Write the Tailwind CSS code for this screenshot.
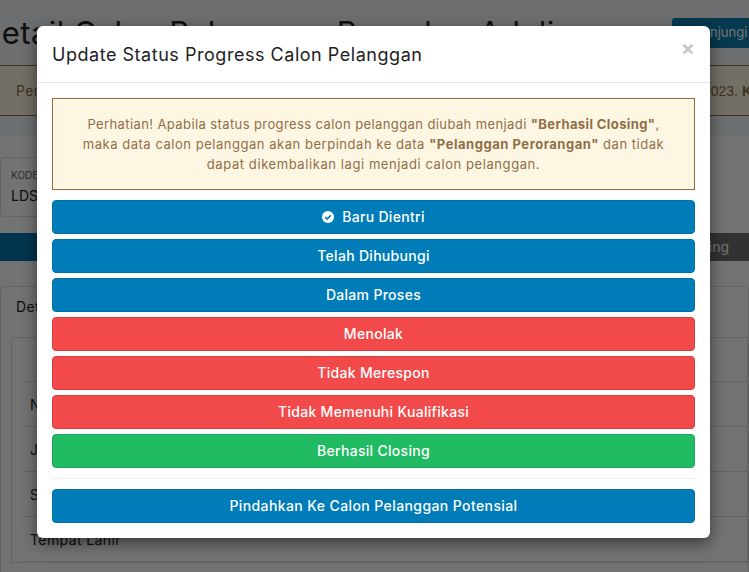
<!DOCTYPE html>
<html lang="en">
<head>
    <meta charset="UTF-8">
    <meta name="viewport" content="width=device-width, initial-scale=1.0">
    <title>Update Status Progress</title>
    <script src="https://cdn.jsdelivr.net/npm/@tailwindcss/browser@4"></script>
</head>
<body class="relative h-[572px] w-[749px] overflow-hidden bg-white font-['Inter','Open_Sans',sans-serif] text-[#222]">
    <!-- Page behind the modal -->
    <div class="h-[572px] overflow-hidden">
        <div class="flex h-[137px] flex-col bg-[#f1f4f7]">
            <div class="flex h-[65px] items-center justify-between">
                <h1 class="ml-[-21px] text-[31px] leading-none tracking-[0.4px] whitespace-nowrap">Detail Calon Pelanggan Pangdep Adelia</h1>
                <div class="mr-[-10px] flex h-[30px] w-[87px] shrink-0 items-center rounded-[3px] bg-[#0c7fb0] pl-[10px] text-[13px] text-white">
                    <svg class="size-3" viewBox="0 0 12 12" fill="none" stroke="#fff"><rect x="1" y="1" width="10" height="10" rx="1"/></svg>
                    <span>Kunjungi</span>
                </div>
            </div>
            <div class="flex h-[51px] items-center justify-between border-y border-[#8f6b40] bg-[#fdf6e3] px-4 text-sm tracking-[0.4px] text-[#8f6f47]">
                <span>Perhatian</span>
                <span class="mr-[-19px] font-['Liberation_Sans'] tracking-normal">2023. <b>K</b></span>
            </div>
        </div>
        <div class="pt-5">
            <div class="flex h-[60px] w-[200px] flex-col justify-center gap-[2px] rounded border border-[#ddd] bg-white pl-[10px]">
                <span class="text-[10px] text-[#666]">KODE</span>
                <span class="text-[14px]">LDS0001</span>
            </div>
            <div class="mt-4 flex h-[28px] justify-between bg-[#0077b0] text-sm text-white">
                <span></span>
                <span class="flex w-[60px] items-center justify-end bg-[#6f6f6f] pr-[20px]">ing</span>
            </div>
            <div class="mt-[25px] h-[300px] rounded border border-[#ddd] bg-white">
                <div class="pt-[10px] pl-[15px] text-sm tracking-[0.4px]">Detail</div>
                <div class="mt-[20px] ml-[10px] border border-[#ddd] pl-[10px]">
                    <div class="h-[44px] border-b border-[#ddd]"></div>
                    <div class="flex h-[45px] items-center border-b border-[#ddd] pt-px pl-2 text-sm tracking-[0.4px]">Nama</div>
                    <div class="flex h-[45px] items-center border-b border-[#ddd] pt-px pl-2 text-sm tracking-[0.4px]">Jenis</div>
                    <div class="flex h-[45px] items-center border-b border-[#ddd] pt-px pl-2 text-sm tracking-[0.4px]">Status</div>
                    <div class="flex h-[45px] items-center border-b border-[#ddd] pt-px pl-2 text-sm tracking-[0.4px]">Tempat Lahir</div>
                </div>
            </div>
        </div>
    </div>

    <!-- Backdrop -->
    <div class="absolute inset-0 bg-black/55"></div>

    <!-- Modal -->
    <div class="absolute top-[26px] left-[37px] w-[673px] rounded-md bg-white shadow-[0_5px_15px_rgba(0,0,0,0.5)]">
        <div class="relative flex h-[57px] items-center border-b border-[#e5e5e5] pl-[15px]">
            <h4 class="text-[18px] tracking-[0.53px] text-[#222]">Update Status Progress Calon Pelanggan</h4>
            <span class="absolute top-[10px] right-[16px] font-['Liberation_Sans'] text-[21px] leading-[26px] font-bold text-[#c4c4c4]">×</span>
        </div>
        <div class="p-[15px]">
            <div class="flex h-[92px] flex-col justify-center border border-[#8f6b40] bg-[#fdf6e3] px-4 text-center text-[13px] leading-5 tracking-[0.4px] text-[#8f6f47]">
                <p>Perhatian! Apabila status progress calon pelanggan diubah menjadi <b>"Berhasil Closing"</b>,</p>
                <p class="tracking-[0.53px]">maka data calon pelanggan akan berpindah ke data <b>"Pelanggan Perorangan"</b> dan tidak</p>
                <p class="tracking-[0.58px]">dapat dikembalikan lagi menjadi calon pelanggan.</p>
            </div>
            <div class="mt-[10px] flex flex-col gap-[5px] text-sm font-medium tracking-[0.3px] text-white">
                <button class="flex h-[34px] items-center justify-center gap-2 rounded border border-[#0271a8] bg-[#007cb8]">
                    <svg class="size-3" viewBox="0 0 12 12"><circle cx="6" cy="6" r="6" fill="#fff"/><path d="M3.2 6.2 5.2 8.1 8.8 4.4" fill="none" stroke="#007cb8" stroke-width="1.7"/></svg>
                    Baru Dientri
                </button>
                <button class="h-[34px] rounded border border-[#0271a8] bg-[#007cb8]">Telah Dihubungi</button>
                <button class="h-[34px] rounded border border-[#0271a8] bg-[#007cb8]">Dalam Proses</button>
                <button class="h-[34px] rounded border border-[#dc3c3c] bg-[#f24a4a]">Menolak</button>
                <button class="h-[34px] rounded border border-[#dc3c3c] bg-[#f24a4a]">Tidak Merespon</button>
                <button class="h-[34px] rounded border border-[#dc3c3c] bg-[#f24a4a]">Tidak Memenuhi Kualifikasi</button>
                <button class="h-[34px] rounded border border-[#1ca85a] bg-[#20bb63]">Berhasil Closing</button>
            </div>
            <hr class="my-[10px] border-[#eee]">
            <button class="h-[34px] w-full rounded border border-[#0271a8] bg-[#007cb8] text-sm font-medium tracking-[0.4px] text-white">Pindahkan Ke Calon Pelanggan Potensial</button>
        </div>
    </div>
</body>
</html>
